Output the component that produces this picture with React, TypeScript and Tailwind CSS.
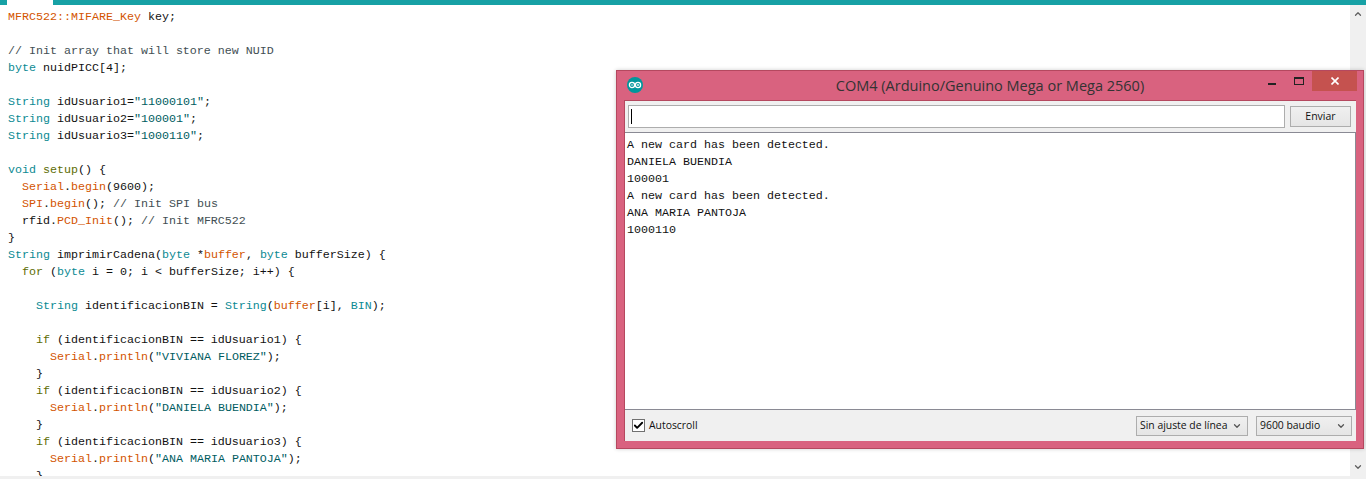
import { ChevronDown, ChevronUp, Check } from 'lucide-react';

const K = ({ c }: { c: string }) => <span className="text-[#0b8a93]">{c}</span>;
const O = ({ c }: { c: string }) => <span className="text-[#d35400]">{c}</span>;
const S = ({ c }: { c: string }) => <span className="text-[#005c5f]">{c}</span>;
const G = ({ c }: { c: string }) => <span className="text-[#5e6d03]">{c}</span>;
const C = ({ c }: { c: string }) => <span className="text-[#434f54]">{c}</span>;

const codeLines = [
  <><O c="MFRC522::MIFARE_Key" /> key;</>,
  <>&nbsp;</>,
  <><C c="// Init array that will store new NUID" /></>,
  <><K c="byte" /> nuidPICC[4];</>,
  <>&nbsp;</>,
  <><K c="String" /> idUsuario1=<S c={'"11000101"'} />;</>,
  <><K c="String" /> idUsuario2=<S c={'"100001"'} />;</>,
  <><K c="String" /> idUsuario3=<S c={'"1000110"'} />;</>,
  <>&nbsp;</>,
  <><K c="void" /> <G c="setup" />() {'{'}</>,
  <>  <O c="Serial" />.<O c="begin" />(9600);</>,
  <>  <O c="SPI" />.<O c="begin" />(); <C c="// Init SPI bus" /></>,
  <>  rfid.<O c="PCD_Init" />(); <C c="// Init MFRC522" /></>,
  <>{'}'}</>,
  <><K c="String" /> imprimirCadena(<K c="byte" /> *<O c="buffer" />, <K c="byte" /> bufferSize) {'{'}</>,
  <>  <G c="for" /> (<K c="byte" /> i = 0; i &lt; bufferSize; i++) {'{'}</>,
  <>&nbsp;</>,
  <>    <K c="String" /> identificacionBIN = <K c="String" />(<O c="buffer" />[i], <K c="BIN" />);</>,
  <>&nbsp;</>,
  <>    <G c="if" /> (identificacionBIN == idUsuario1) {'{'}</>,
  <>      <O c="Serial" />.<O c="println" />(<S c={'"VIVIANA FLOREZ"'} />);</>,
  <>    {'}'}</>,
  <>    <G c="if" /> (identificacionBIN == idUsuario2) {'{'}</>,
  <>      <O c="Serial" />.<O c="println" />(<S c={'"DANIELA BUENDIA"'} />);</>,
  <>    {'}'}</>,
  <>    <G c="if" /> (identificacionBIN == idUsuario3) {'{'}</>,
  <>      <O c="Serial" />.<O c="println" />(<S c={'"ANA MARIA PANTOJA"'} />);</>,
  <>    {'}'}</>,
];

const serialLines = [
  'A new card has been detected.',
  'DANIELA BUENDIA',
  '100001',
  'A new card has been detected.',
  'ANA MARIA PANTOJA',
  '1000110',
];

const ui = "font-['Open_Sans','Liberation_Sans',sans-serif]";

function ArduinoLogo() {
  return (
    <svg width="16" height="16" viewBox="0 0 16 16" className="shrink-0">
      <circle cx="8" cy="8" r="8" fill="#00979c" />
      <circle cx="5" cy="8" r="2.6" fill="none" stroke="#fff" strokeWidth="1.3" />
      <circle cx="11" cy="8" r="2.6" fill="none" stroke="#fff" strokeWidth="1.3" />
      <path d="M4 8h2M10 8h2M11 7v2" stroke="#fff" strokeWidth="0.8" />
    </svg>
  );
}

function Select({ label, width }: { label: string; width: string }) {
  return (
    <div className={`${width} h-5 flex items-center justify-between border border-[#adadad] bg-gradient-to-b from-[#f0f0f0] to-[#e5e5e5] pl-[3px] pr-[5px] text-[10.4px] text-[#111]`}>
      <span className="whitespace-nowrap">{label}</span>
      <ChevronDown size={10} strokeWidth={3} className="shrink-0 text-[#555]" />
    </div>
  );
}

export default function App() {
  return (
    <div className="relative w-[1366px] h-[479px] overflow-hidden bg-white">
      {/* tab strip */}
      <div className="flex h-[5px]">
        <div className="w-[7px] bg-[#17a1a5]" />
        <div className="w-[46px] bg-white" />
        <div className="flex-1 bg-[#17a1a5]" />
      </div>

      <div className="flex h-[471px]">
        <pre className="flex-1 overflow-hidden pl-2 pt-[4px] font-['Liberation_Mono',monospace] text-[11.67px] leading-[17px] text-[#111]">
          {codeLines.map((line, i) => (
            <div key={i} className="h-[17px]">{line}</div>
          ))}
          <div className="h-[17px] text-[#5e6d03]">  {'}'}</div>
        </pre>
        <div className="w-4 flex flex-col justify-between items-center bg-[#f0f0f0] pt-1 pb-1">
          <ChevronUp size={10} strokeWidth={3} className="text-[#606060]" />
          <ChevronDown size={10} strokeWidth={3} className="text-[#606060]" />
        </div>
      </div>
      <div className="h-[3px] bg-[#f0f0f0]" />

      {/* serial monitor window */}
      <div className="absolute left-[616px] top-[70px] w-[748px] h-[379px] flex flex-col border border-[#b5485f] bg-[#d9627f] shadow-[0_0_4px_rgba(0,0,0,0.2)]">
        <div className="relative h-[29px] shrink-0 flex items-center justify-center">
          <div className="absolute left-[10px] top-[6px]"><ArduinoLogo /></div>
          <span className={`${ui} text-[14.5px] text-[#333]`}>COM4 (Arduino/Genuino Mega or Mega 2560)</span>
          <div className="absolute right-[6px] top-0 flex h-5 items-start">
            <div className="mt-[12px] mr-[18px] w-2 h-[2px] bg-[#222]" />
            <div className="mt-[6px] mr-[8px] w-[10px] h-[8px] border border-[#222] border-t-2" />
            <div className="w-[45px] h-5 bg-[#c5524f] flex items-center justify-center text-white">
              <svg width="8" height="8" viewBox="0 0 8 8">
                <path d="M0.5 0.5l7 7M7.5 0.5l-7 7" stroke="#fff" strokeWidth="1.6" />
              </svg>
            </div>
          </div>
        </div>

        <div className="mx-[7px] flex-1 flex flex-col bg-[#f0f0f0] border-t border-l border-[#b5485f]">
          <div className="h-[31px] shrink-0 flex items-start gap-[5px] pt-1 pl-[3px] pr-[5px]">
            <div className="flex-1 h-[23px] border border-[#adadad] bg-white flex items-center pl-[2px]">
              <div className="w-px h-[15px] bg-black" />
            </div>
            <div className={`${ui} mt-px w-[61px] h-[21px] border border-[#adadad] bg-gradient-to-b from-[#f0f0f0] to-[#e5e5e5] flex items-center justify-center text-[10.5px] text-[#111]`}>Enviar</div>
          </div>
          <div className="flex-1 bg-white border-t border-b border-[#8a8a94] border-r pl-[2px] pt-[4px] font-['Liberation_Mono',monospace] text-[11.67px] leading-[17px] text-[#111]">
            {serialLines.map((line, i) => (
              <div key={i} className="h-[17px] whitespace-pre">{line}</div>
            ))}
          </div>
          <div className={`${ui} h-[31px] shrink-0 flex items-center pl-[7px] pr-[4px] text-[10.4px] text-[#111]`}>
            <div className="w-[13px] h-[13px] border border-[#707070] bg-white flex items-center justify-center">
              <Check size={11} strokeWidth={4} className="text-black" />
            </div>
            <span className="ml-[4px]">Autoscroll</span>
            <div className="ml-auto flex gap-2">
              <Select label="Sin ajuste de línea" width="w-[112px]" />
              <Select label="9600 baudio" width="w-[96px]" />
            </div>
          </div>
        </div>
        <div className="h-[7px] shrink-0" />
      </div>
    </div>
  );
}
